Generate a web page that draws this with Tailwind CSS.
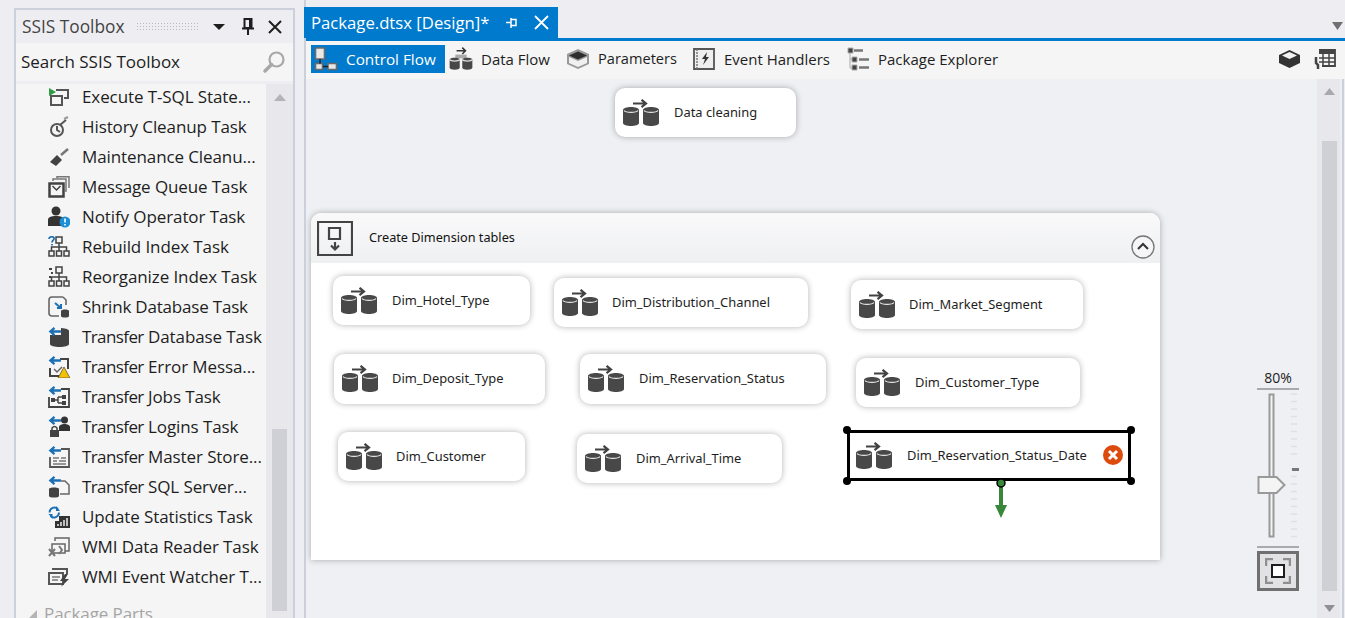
<!DOCTYPE html>
<html lang="en">
<head>
  <meta charset="UTF-8">
  <title>Package.dtsx [Design]*</title>
  <script src="https://cdn.jsdelivr.net/npm/@tailwindcss/browser@4"></script>
</head>
<body class="w-[1345px] h-[618px] overflow-hidden bg-[#eeeef2] flex font-['Open_Sans',sans-serif] text-[#1e1e1e]">

  <!-- shared icons -->
  <svg class="hidden">
    <symbol id="pkg" viewBox="0 0 38 28">
      <path d="M11 4.500h13M19.500 .8l4.500 3.700-4.500 3.700" fill="none" stroke="#424242" stroke-width="2.200"/>
      <path d="M1 11c0-4 16-4 16 0v13c0 4-16 4-16 0z" fill="#484848"/>
      <path d="M21 11c0-4 16-4 16 0v13c0 4-16 4-16 0z" fill="#484848"/>
      <path d="M2 11.500c2 2.500 12 2.500 14 0M22 11.500c2 2.500 12 2.500 14 0" fill="none" stroke="#e8e8e8" stroke-width="1.200"/>
    </symbol>
    <symbol id="tree" viewBox="0 0 22 22">
      <path d="M11 7v4M3.500 15v-4h15v4M11 11v4" fill="none" stroke="#424242" stroke-width="1.500"/>
      <path d="M8 1h6v6H8zM1 15h5v5H1zM8.500 15h5v5h-5zM16 15h5v5h-5z" fill="#f5f5f5" stroke="#424242" stroke-width="1.500"/>
    </symbol>
    <symbol id="back" viewBox="0 0 10 7">
      <path d="M10 3.500H2M5 .7 1.800 3.500 5 6.300" fill="none" stroke="#1b6fb5" stroke-width="1.800"/>
    </symbol>
  </svg>

  <!-- toolbox panel -->
  <aside class="ml-[14px] mt-[8px] w-[281px] h-[640px] shrink-0 border-2 border-[#ccd0dc] flex flex-col">
    <div class="h-[33px] shrink-0 flex items-center pl-[6px] pr-[10px] text-[#444] text-[17.300px]">
      <span class="whitespace-nowrap">SSIS Toolbox</span>
      <div class="ml-[12px] w-[66px] h-[9px] bg-[radial-gradient(#b9b9c0_1px,transparent_1px)] bg-[length:3px_3px]"></div>
      <svg class="ml-[13px] shrink-0" width="14" height="8" viewBox="0 0 14 8"><path d="M1 1h12L7 7z" fill="#1e1e1e"/></svg>
      <svg class="ml-[15px] shrink-0" width="14" height="18" viewBox="0 0 14 18"><path d="M3.500 1h7v9h-7zM1 10.500h12M7 11v6M9 2v8" fill="none" stroke="#1e1e1e" stroke-width="2"/></svg>
      <svg class="ml-[12px] shrink-0" width="16" height="16" viewBox="0 0 16 16"><path d="M2 2l12 12M14 2 2 14" stroke="#1e1e1e" stroke-width="2"/></svg>
    </div>
    <div class="h-[38px] shrink-0 bg-[#f5f5f5] flex items-center pl-[5px] pr-[7px] justify-between text-[17px]">
      <span>Search SSIS Toolbox</span>
      <svg width="24" height="24" viewBox="0 0 24 24"><circle cx="14.500" cy="9.500" r="7" fill="none" stroke="#a8a8a8" stroke-width="2.200"/><path d="M9.500 14.500 3 21" stroke="#a8a8a8" stroke-width="3.500" stroke-linecap="round"/></svg>
    </div>
    <div class="flex flex-1 mt-[3px] min-h-0">
      <ul class="w-[250px] bg-[#f5f5f5] pl-[32px] text-[17px] leading-[30px] whitespace-nowrap -tracking-[0.1px]">
        <li class="h-[30px] -mt-[2px] flex items-center gap-[12px]">
          <svg class="shrink-0" width="22" height="22" viewBox="0 0 22 22"><path d="M8 4h12v8h-4M3 10h11v9H3z" fill="none" stroke="#555" stroke-width="2"/><path d="M1 2l7 4-7 4z" fill="#2f9a45"/></svg>
          <span>Execute T-SQL State...</span></li>
        <li class="h-[30px] flex items-center gap-[12px]">
          <svg class="shrink-0" width="22" height="22" viewBox="0 0 22 22"><circle cx="9" cy="14" r="6" fill="none" stroke="#555" stroke-width="2"/><path d="M9 10v4l3 2M12 9l6-5" fill="none" stroke="#555" stroke-width="2"/><path d="M16 3l4-2" stroke="#999" stroke-width="2"/></svg>
          <span>History Cleanup Task</span></li>
        <li class="h-[30px] flex items-center gap-[12px]">
          <svg class="shrink-0" width="22" height="22" viewBox="0 0 22 22"><path d="M13 9l7-6" stroke="#777" stroke-width="2.500"/><path d="M2 16l7-7 5 5-6 6z" fill="#424242"/></svg>
          <span>Maintenance Cleanu...</span></li>
        <li class="h-[30px] flex items-center gap-[12px]">
          <svg class="shrink-0" width="22" height="22" viewBox="0 0 22 22"><path d="M1.500 7.500h14v13h-14z" fill="none" stroke="#424242" stroke-width="2.500"/><path d="M4.500 10l4 4 4-4" fill="none" stroke="#424242" stroke-width="1.500"/><path d="M5 5V3h13v12h-1M9 2V.8h12V12" fill="none" stroke="#777" stroke-width="1.500"/></svg>
          <span>Message Queue Task</span></li>
        <li class="h-[30px] flex items-center gap-[12px]">
          <svg class="shrink-0" width="22" height="22" viewBox="0 0 22 22"><circle cx="8" cy="5" r="4.500" fill="#333"/><path d="M0 20v-6c0-3 3-4 8-4s8 1 8 4v6z" fill="#333"/><circle cx="17" cy="16" r="5.500" fill="#1c8fd6"/><path d="M17 12.500v4M17 18v1.500" stroke="#fff" stroke-width="1.600"/></svg>
          <span>Notify Operator Task</span></li>
        <li class="h-[30px] flex items-center gap-[12px]">
          <svg class="shrink-0" width="22" height="22"><use href="#tree"/><path d="M1 3c0-3 6-3 5 0-.5 1.500-2 1.500-2 3.500M4 8v1.500" fill="none" stroke="#1b6fb5" stroke-width="1.700"/></svg>
          <span>Rebuild Index Task</span></li>
        <li class="h-[30px] flex items-center gap-[12px]">
          <svg class="shrink-0" width="22" height="22"><use href="#tree"/><path d="M1 3h3M3 7h2M1 11h2" stroke="#424242" stroke-width="2"/></svg>
          <span>Reorganize Index Task</span></li>
        <li class="h-[30px] flex items-center gap-[12px]">
          <svg class="shrink-0" width="22" height="22" viewBox="0 0 22 22"><path d="M15 1H4Q1 1 1 4v13q0 3 3 3h7M15 1l3 3v5" fill="none" stroke="#666" stroke-width="1.600"/><path d="M7 7l6 5M13 8v4H9" fill="none" stroke="#1b6fb5" stroke-width="2"/><path d="M13 15c0-2 8-2 8 0v5c0 2-8 2-8 0z" fill="#424242"/></svg>
          <span class="-tracking-[0.2px]">Shrink Database Task</span></li>
        <li class="h-[30px] flex items-center gap-[12px]">
          <svg class="shrink-0" width="22" height="22" viewBox="0 0 22 22"><path d="M2 5c0-4 19-4 19 0v13c0 4-19 4-19 0z" fill="#424242"/><path d="M0 1h13v8H0z" fill="#f5f5f5"/><svg x="0" y="1" width="13" height="9"><use href="#back"/></svg></svg>
          <span><span class="-tracking-[0.6px]">Transfer</span> Database Task</span></li>
        <li class="h-[30px] flex items-center gap-[12px]">
          <svg class="shrink-0" width="22" height="22" viewBox="0 0 22 22"><path d="M12 3h8v10M2 12v8h9" fill="none" stroke="#424242" stroke-width="2"/><path d="M6 13l3 3 5-5" fill="none" stroke="#666" stroke-width="1.500"/><svg x="0" y="0" width="13" height="9"><use href="#back"/></svg><path d="M16 11l6 11H10z" fill="#f2c200" stroke="#333" stroke-width=".6"/></svg>
          <span><span class="-tracking-[0.6px]">Transfer</span> Error Messa...</span></li>
        <li class="h-[30px] flex items-center gap-[12px]">
          <svg class="shrink-0" width="22" height="22" viewBox="0 0 22 22"><path d="M13 3h8v18H1V11" fill="none" stroke="#424242" stroke-width="1.800"/><path d="M5 14h5M10 11v6M10 11h4M10 17h4" stroke="#424242" stroke-width="1.500" fill="none"/><path d="M3 12h4v4H3zM14 9h4v4h-4zM14 15h4v4h-4z" fill="#424242"/><svg x="0" y="0" width="13" height="9"><use href="#back"/></svg></svg>
          <span><span class="-tracking-[0.6px]">Transfer</span> Jobs Task</span></li>
        <li class="h-[30px] flex items-center gap-[12px]">
          <svg class="shrink-0" width="22" height="22" viewBox="0 0 22 22"><svg x="0" y="0" width="13" height="9"><use href="#back"/></svg><circle cx="16.500" cy="4" r="3.500" fill="#333"/><path d="M11 15v-4c0-2 3-3 5.500-3s5.500 1 5.500 3v4z" fill="#333"/><path d="M2 14h9v7H2z" fill="#424242"/><path d="M4 14v-2q2.500-3 5 0v2" fill="none" stroke="#424242" stroke-width="1.500"/></svg>
          <span><span class="-tracking-[0.6px]">Transfer</span> Logins Task</span></li>
        <li class="h-[30px] flex items-center gap-[12px]">
          <svg class="shrink-0" width="22" height="22" viewBox="0 0 22 22"><path d="M13 3h8v18H2V11" fill="none" stroke="#555" stroke-width="1.800"/><path d="M5 12h6M13 12h5M5 15h4M11 15h7M5 18h13" stroke="#777" stroke-width="1.500"/><svg x="0" y="0" width="13" height="9"><use href="#back"/></svg></svg>
          <span><span class="-tracking-[0.6px]">Transfer</span> Master Store...</span></li>
        <li class="h-[30px] flex items-center gap-[12px]">
          <svg class="shrink-0" width="22" height="22" viewBox="0 0 22 22"><path d="M13 5h4l4 4v9h-9" fill="none" stroke="#666" stroke-width="1.500"/><path d="M1 13c0-2 10-2 10 0v7c0 2-10 2-10 0z" fill="#424242"/><svg x="0" y="0" width="13" height="9"><use href="#back"/></svg></svg>
          <span><span class="-tracking-[0.6px]">Transfer</span> SQL Server...</span></li>
        <li class="h-[30px] flex items-center gap-[12px]">
          <svg class="shrink-0" width="22" height="22" viewBox="0 0 22 22"><path d="M11 10h11v12H7v-7h4z" fill="#333"/><path d="M10 20v-2M13 20v-4M16 20v-6M19 20v-8" stroke="#eee" stroke-width="1.500"/><path d="M1.500 6.500A5 5 0 0 1 10 3M11 6.500A5 5 0 0 1 2.500 10" fill="none" stroke="#1b6fb5" stroke-width="2"/><path d="M8 0v5h4zM4.500 13V8h-4z" fill="#1b6fb5"/></svg>
          <span>Update Statistics Task</span></li>
        <li class="h-[30px] flex items-center gap-[12px]">
          <svg class="shrink-0" width="22" height="22" viewBox="0 0 22 22"><path d="M7 5V2h14v13h-4M4 8h13v9H4z" fill="none" stroke="#666" stroke-width="1.500"/><path d="M1 20l6-7M7 20l-6-7M11 10l3 4-3 4" fill="none" stroke="#777" stroke-width="2"/></svg>
          <span>WMI Data Reader Task</span></li>
        <li class="h-[30px] flex items-center gap-[12px]">
          <svg class="shrink-0" width="22" height="22" viewBox="0 0 22 22"><path d="M4 3h15v5M1 7h14v11H1z" fill="none" stroke="#555" stroke-width="2"/><path d="M4 11h8M4 14h6" stroke="#777" stroke-width="1.500"/><path d="M17 8l-5 7h4l-3 6 8-8h-4l3-5z" fill="#424242"/></svg>
          <span>WMI Event Watcher T...</span></li>
        <li class="h-[30px] flex items-center mt-[7px] -ml-[20px] text-[#a5a5a5]">
          <svg class="shrink-0" width="10" height="10" viewBox="0 0 10 10"><path d="M9 1v8H1z" fill="#b5b5b5"/></svg>
          <span class="ml-[6px]">Package Parts</span></li>
      </ul>
      <div class="w-[27px] bg-[#e8e8ec] pl-[6px] flex flex-col">
        <svg class="mt-[10px] ml-[2px]" width="12" height="7" viewBox="0 0 12 7"><path d="M0 7 6 0l6 7z" fill="#b4b4b8"/></svg>
        <div class="mt-[328px] w-[15px] h-[182px] bg-[#cfd0d6]"></div>
      </div>
    </div>
  </aside>

  <!-- designer -->
  <main class="ml-[9px] flex-1 h-full border-l-2 border-[#ccd0dc] flex flex-col min-w-0">
    <div class="h-[31px] mt-[7px] shrink-0 flex items-stretch justify-between">
      <div class="w-[254px] -ml-[2px] bg-[#007acc] text-white flex items-center pl-[7px] text-[16.700px] whitespace-nowrap">
        <span>Package.dtsx [Design]*</span>
        <svg class="ml-[16px] shrink-0" width="13" height="12" viewBox="0 0 13 12"><path d="M6 2.500h5v6H6zM1 5.500h5M6 1v10" fill="none" stroke="#fff" stroke-width="1.500"/></svg>
        <svg class="ml-[16px] shrink-0" width="15" height="15" viewBox="0 0 15 15"><path d="M1 1l13 13M14 1 1 14" stroke="#fff" stroke-width="1.800"/></svg>
      </div>
      <svg class="mr-[2px] mt-[15px]" width="11" height="8" viewBox="0 0 11 8"><path d="M0 0h11L5.500 8z" fill="#707070"/></svg>
    </div>
    <div class="h-[3px] shrink-0 bg-[#007acc]"></div>

    <nav class="h-[38px] shrink-0 bg-[#f5f5f5] flex items-center text-[15px] whitespace-nowrap pb-[2px]">
      <div class="ml-[5px] h-[28px] w-[134px] bg-[#007acc] text-white flex items-center pl-[3px]">
        <svg class="shrink-0" width="24" height="24" viewBox="0 0 24 24"><path d="M1.500 1h9v11h-9zM1.500 16.500h7v6h-7zM14 16.500h8.500v6H14z" fill="#e8e8e8" stroke="#6a6a6a" stroke-width="1.600"/><path d="M6 12v4.500M14 19.500H9" stroke="#222" stroke-width="1.500"/></svg>
        <span class="ml-[8px] text-[15.300px]">Control Flow</span>
      </div>
      <div class="ml-[4px] w-[102px] flex items-center">
        <svg class="shrink-0" width="24" height="24" viewBox="0 0 38 38"><path d="M12 6h14M21 1l5 5-5 5" fill="none" stroke="#333" stroke-width="2.500"/><path d="M10 12h18v6H10z" fill="#aaa"/><path d="M1 20c0-4 16-4 16 0v13c0 4-16 4-16 0zM21 20c0-4 16-4 16 0v13c0 4-16 4-16 0z" fill="#484848"/><path d="M1 20c2 3 14 3 16 0M21 20c2 3 14 3 16 0" fill="none" stroke="#ddd" stroke-width="2"/></svg>
        <span class="ml-[8px]">Data Flow</span>
      </div>
      <div class="ml-[15px] w-[111px] flex items-center">
        <svg class="shrink-0" width="24" height="22" viewBox="0 0 24 22"><path d="M12 1l11 5v10l-11 5-11-5V6z" fill="#999"/><path d="M12 3.500l9 4-9 4-9-4z" fill="#2e2e2e"/><path d="M3 9l9 4 9-4v6l-9 4-9-4z" fill="#f0f0f0"/></svg>
        <span class="ml-[8px] text-[14.600px]">Parameters</span>
      </div>
      <div class="ml-[16px] w-[137px] flex items-center">
        <svg class="shrink-0" width="22" height="22" viewBox="0 0 22 22"><path d="M1 1h20v20H1z" fill="#eee" stroke="#555" stroke-width="1.800"/><path d="M4 1v20" stroke="#777" stroke-width="1.500" stroke-dasharray="2 1"/><path d="M14 4l-5 7h3l-2 6 6-8h-3z" fill="#333"/></svg>
        <span class="ml-[9px]">Event Handlers</span>
      </div>
      <div class="ml-[17px] flex items-center">
        <svg class="shrink-0" width="23" height="24" viewBox="0 0 23 24"><path d="M1 1h5v5H1zM5 10h5v5H5zM5 18h5v5H5z" fill="#444" stroke="#aaa"/><path d="M7 3.500h9M12 12.500h10M12 20.500h10" stroke="#777" stroke-width="2.500"/><path d="M3 6v15h2M3 12h2" stroke="#aaa" fill="none"/></svg>
        <span class="ml-[8px]">Package Explorer</span>
      </div>
      <div class="ml-auto mr-[9px] flex items-center gap-[13px]">
        <svg class="shrink-0" width="23" height="20" viewBox="0 0 23 20"><path d="M11.500 1 22 6v8l-10.500 5L1 14V6z" fill="#333"/><path d="M11.500 3 19 6.500 11.500 10 4 6.500z" fill="#f2f2f2"/></svg>
        <svg class="shrink-0" width="22" height="22" viewBox="0 0 22 22"><path d="M5 2h16v16H8" fill="none" stroke="#444" stroke-width="1.800"/><path d="M5 2h16v4H5z" fill="#444"/><path d="M9 6v12M15 6v12M5 10h16M5 14h16" stroke="#444" stroke-width="1.500"/><path d="M2 9v6l2 2v4" fill="none" stroke="#444" stroke-width="2.500"/></svg>
      </div>
    </nav>

    <div class="flex flex-1 min-h-0">
      <!-- free canvas: tasks sit where the package author dropped them -->
      <section class="relative w-[1011px] bg-[#eff0f3] overflow-hidden text-[12.900px] font-['Noto_Sans',sans-serif]">
        <div class="absolute left-[309px] top-[9px] w-[181px] h-[49px] bg-white rounded-[10px] shadow-[0_0_6px_rgba(0,0,0,0.3)] flex items-center pl-[7px] whitespace-nowrap">
          <svg width="38" height="28" class="shrink-0"><use href="#pkg"/></svg><span class="ml-[14px]">Data cleaning</span>
        </div>

        <div class="absolute left-[5px] top-[134px] w-[849px] h-[347px] rounded-t-[10px] bg-white shadow-[0_0_6px_rgba(0,0,0,0.3)]">
          <div class="h-[50px] rounded-t-[10px] bg-gradient-to-b from-[#f9f9fa] to-[#eff0f2] flex items-center pl-[6px]">
            <svg class="shrink-0" width="36" height="35" viewBox="0 0 36 35"><path d="M1 1h34v33H1z" fill="none" stroke="#444" stroke-width="2.200"/><path d="M12 7h11v11H12z" fill="none" stroke="#444" stroke-width="2.200"/><path d="M18 21v7M14 24.500l4 4 4-4" fill="none" stroke="#444" stroke-width="2.200"/></svg>
            <span class="ml-[16px] text-[12.700px] text-[#111] whitespace-nowrap">Create Dimension tables</span>
            <svg class="ml-auto mr-[4px] mt-[18px] shrink-0" width="26" height="26" viewBox="0 0 26 26"><circle cx="13" cy="13" r="11" fill="#f6f6f8" stroke="#777" stroke-width="1.300"/><path d="M8 15l5-5 5 5" fill="none" stroke="#333" stroke-width="2"/></svg>
          </div>

          <div class="absolute left-[22px] top-[63px] w-[197px] h-[49px] bg-white rounded-[10px] shadow-[0_0_6px_rgba(0,0,0,0.3)] flex items-center pl-[7px] whitespace-nowrap">
            <svg width="38" height="28" class="shrink-0"><use href="#pkg"/></svg><span class="ml-[14px]">Dim_Hotel_Type</span>
          </div>
          <div class="absolute left-[243px] top-[65px] w-[254px] h-[49px] bg-white rounded-[10px] shadow-[0_0_6px_rgba(0,0,0,0.3)] flex items-center pl-[7px] whitespace-nowrap">
            <svg width="38" height="28" class="shrink-0"><use href="#pkg"/></svg><span class="ml-[13px]">Dim_Distribution_Channel</span>
          </div>
          <div class="absolute left-[540px] top-[67px] w-[232px] h-[49px] bg-white rounded-[10px] shadow-[0_0_6px_rgba(0,0,0,0.3)] flex items-center pl-[7px] whitespace-nowrap">
            <svg width="38" height="28" class="shrink-0"><use href="#pkg"/></svg><span class="ml-[13px]">Dim_Market_Segment</span>
          </div>
          <div class="absolute left-[23px] top-[141px] w-[211px] h-[50px] bg-white rounded-[10px] shadow-[0_0_6px_rgba(0,0,0,0.3)] flex items-center pl-[7px] whitespace-nowrap">
            <svg width="38" height="28" class="shrink-0"><use href="#pkg"/></svg><span class="ml-[13px]">Dim_Deposit_Type</span>
          </div>
          <div class="absolute left-[269px] top-[141px] w-[246px] h-[50px] bg-white rounded-[10px] shadow-[0_0_6px_rgba(0,0,0,0.3)] flex items-center pl-[7px] whitespace-nowrap">
            <svg width="38" height="28" class="shrink-0"><use href="#pkg"/></svg><span class="ml-[14px]">Dim_Reservation_Status</span>
          </div>
          <div class="absolute left-[545px] top-[145px] w-[224px] h-[49px] bg-white rounded-[10px] shadow-[0_0_6px_rgba(0,0,0,0.3)] flex items-center pl-[7px] whitespace-nowrap">
            <svg width="38" height="28" class="shrink-0"><use href="#pkg"/></svg><span class="ml-[14px]">Dim_Customer_Type</span>
          </div>
          <div class="absolute left-[27px] top-[219px] w-[187px] h-[49px] bg-white rounded-[10px] shadow-[0_0_6px_rgba(0,0,0,0.3)] flex items-center pl-[7px] whitespace-nowrap">
            <svg width="38" height="28" class="shrink-0"><use href="#pkg"/></svg><span class="ml-[13px]">Dim_Customer</span>
          </div>
          <div class="absolute left-[266px] top-[221px] w-[205px] h-[49px] bg-white rounded-[10px] shadow-[0_0_6px_rgba(0,0,0,0.3)] flex items-center pl-[7px] whitespace-nowrap">
            <svg width="38" height="28" class="shrink-0"><use href="#pkg"/></svg><span class="ml-[14px]">Dim_Arrival_Time</span>
          </div>

          <!-- selected task with handles -->
          <div class="absolute left-[536px] top-[217px] w-[284px] h-[51px] bg-white rounded-[3px] border-[3px] border-black flex items-center pl-[5px] whitespace-nowrap">
            <svg width="38" height="28" class="shrink-0"><use href="#pkg"/></svg><span class="ml-[14px]">Dim_Reservation_Status_Date</span>
            <svg class="absolute right-[4px] top-[11px]" width="22" height="22" viewBox="0 0 22 22"><circle cx="11" cy="11" r="10" fill="#dc4a0c"/><path d="M7 7l8 8M15 7l-8 8" stroke="#fff" stroke-width="3"/></svg>
            <span class="absolute -left-[7px] -top-[7px] w-[8px] h-[8px] rounded-full bg-black"></span>
            <span class="absolute -right-[7px] -top-[7px] w-[8px] h-[8px] rounded-full bg-black"></span>
            <span class="absolute -left-[7px] -bottom-[7px] w-[8px] h-[8px] rounded-full bg-black"></span>
            <span class="absolute -right-[7px] -bottom-[7px] w-[8px] h-[8px] rounded-full bg-black"></span>
            <svg class="absolute left-[144px] top-[45px]" width="14" height="41" viewBox="0 0 14 41"><path d="M5 5h4v24H5z" fill="#38873a"/><path d="M1 27h12l-6 13z" fill="#38873a"/><circle cx="7" cy="5" r="4" fill="#38873a" stroke="#000" stroke-width="1.500"/></svg>
          </div>
        </div>

        <!-- zoom slider -->
        <div class="absolute left-[951px] top-[289px] w-[42px] text-center text-[14px] text-[#222] font-['Open_Sans',sans-serif] border-b-2 border-[#aaa] leading-[19px] h-[22px]">80%</div>
        <svg class="absolute left-[951px] top-[313px]" width="42" height="150" viewBox="0 0 42 150">
          <path d="M12.500 2.500h4v142h-4z" fill="#f4f4f4" stroke="#999" stroke-width="2"/>
          <path d="M34 2h6M34 9.500h6M34 17h6M34 24.500h6M34 32h6M34 39.500h6M34 47h6M34 54.500h6M34 62h6M34 77h6M34 84.500h6M34 92h6M34 99.500h6M34 107h6M34 114.500h6M34 122h6M34 129.500h6M34 137h6M34 144.500h6" stroke="#e0e0e4" stroke-width="1.500"/>
          <path d="M35 76h7v3h-7z" fill="#777"/>
          <path d="M1.500 85h18l8 8-8 8h-18z" fill="#f4f4f4" stroke="#999" stroke-width="2"/>
        </svg>
        <div class="absolute left-[951px] top-[467px] w-[42px] h-[2px] bg-[#aaa]"></div>
        <div class="absolute left-[951px] top-[472px] w-[42px] h-[40px] border-[3px] border-[#707070] bg-[#e2e2e4] flex items-center justify-center">
          <svg width="26" height="26" viewBox="0 0 26 26"><path d="M1 8V1h7M18 1h7v7M25 18v7h-7M8 25H1v-7" fill="none" stroke="#8f8f8f" stroke-width="2.500"/><path d="M7 7h12v12H7z" fill="#fff" stroke="#1e1e1e" stroke-width="2"/></svg>
        </div>
      </section>

      <!-- designer scrollbar -->
      <div class="w-[23px] bg-[#e8e8ec] flex flex-col items-center pl-[2px]">
        <svg class="mt-[9px]" width="11" height="7" viewBox="0 0 11 7"><path d="M0 7 5.500 0 11 7z" fill="#a8a8ae"/></svg>
        <div class="mt-[46px] w-[15px] h-[450px] bg-[#cfd0d6]"></div>
        <svg class="mt-[14px]" width="11" height="7" viewBox="0 0 11 7"><path d="M0 0h11L5.500 7z" fill="#8f8f95"/></svg>
      </div>
      <div class="w-[2px] ml-[2px] bg-[#ccd0dc]"></div>
    </div>
  </main>
</body>
</html>
